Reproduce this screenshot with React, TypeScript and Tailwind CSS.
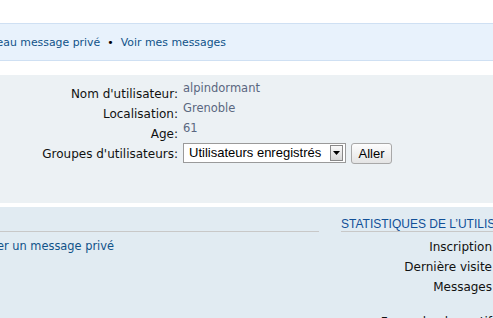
import React from 'react'

const rows = [
  { label: "Nom d'utilisateur:", value: 'alpindormant' },
  { label: 'Localisation:', value: 'Grenoble' },
  { label: 'Age:', value: '61' },
]

const stats = ['Inscription', 'Dernière visite', 'Messages', '', 'Forum le plus actif']

const App: React.FC = () => {
  return (
    <div className="w-[493px] h-[318px] overflow-hidden bg-white font-['DejaVu_Sans',sans-serif]">
      {/* Navbar */}
      <div className="mt-[23px] h-[38px] border-y border-[#cfe0f3] bg-[#e8f2fc] flex items-center">
        <div className="w-[226px] shrink-0 flex justify-end whitespace-nowrap text-[10.9px] text-[#105289] pt-[2px]">
          <span>Envoyer un nouveau message privé</span>
          <span className="mx-[7px] text-black">•</span>
          <span>Voir mes messages</span>
        </div>
      </div>

      {/* Profile details */}
      <div className="mt-[14px] h-[128px] bg-[#ecf1f4] pt-[7px]">
        {rows.map((row) => (
          <div key={row.label} className="flex h-[20px]">
            <div className="w-[178px] shrink-0 text-right text-[12px] text-[#111] pt-[3px]">{row.label}</div>
            <div className="ml-[5px] text-[11.5px] text-[#5a6780] -mt-[2px]">{row.value}</div>
          </div>
        ))}
        <div className="flex items-center h-[24px] mt-[-1px]">
          <div className="w-[178px] shrink-0 text-right text-[12px] text-[#111] pt-[2px]">Groupes d'utilisateurs:</div>
          <div className="ml-[5px] flex items-center h-[20px] w-[163px] border border-[#9a9a9a] bg-white font-['Liberation_Sans',sans-serif] text-[13px] text-black">
            <span className="flex-1 pl-[5px] whitespace-nowrap">Utilisateurs enregistrés</span>
            <span className="w-[13px] h-[16px] mr-[2px] border border-[#888] bg-gradient-to-b from-[#fafafa] to-[#d8d8d8] flex items-center justify-center">
              <svg width="7" height="4" viewBox="0 0 7 4">
                <path d="M0 0h7L3.5 4z" fill="#000" />
              </svg>
            </span>
          </div>
          <button className="ml-[5px] h-[21px] w-[41px] rounded-[3px] border border-[#a8a8a8] bg-gradient-to-b from-[#fdfdfd] to-[#e4e4e4] font-['Liberation_Sans',sans-serif] text-[13px] text-black">
            Aller
          </button>
        </div>
      </div>

      {/* Contact & stats */}
      <div className="mt-[4px] h-[200px] bg-[#e1ebf2] flex">
        <div className="w-[319px] shrink-0">
          <div className="h-[25px] border-b border-[#c8c8c8]" />
          <div className="w-[114px] flex justify-end mt-[6px] whitespace-nowrap text-[11.4px] text-[#105289]">
            Envoyer un message privé
          </div>
        </div>
        <div className="ml-[22px] w-[320px] shrink-0">
          <div className="h-[25px] border-b border-[#c8c8c8] flex items-end">
            <span className="whitespace-nowrap font-['Liberation_Sans',sans-serif] text-[12px] leading-[13px] text-[#115098] uppercase">
              Statistiques de l’utilisateur
            </span>
          </div>
          <div className="pt-[6px] w-[152px]">
            {stats.map((s, i) => (
              <div key={i} className={`${s ? 'h-[20px]' : 'h-[15px]'} text-right text-[12px] text-[#111] whitespace-nowrap pr-[1px]`}>
                {s}
              </div>
            ))}
          </div>
        </div>
      </div>
    </div>
  )
}

export default App
